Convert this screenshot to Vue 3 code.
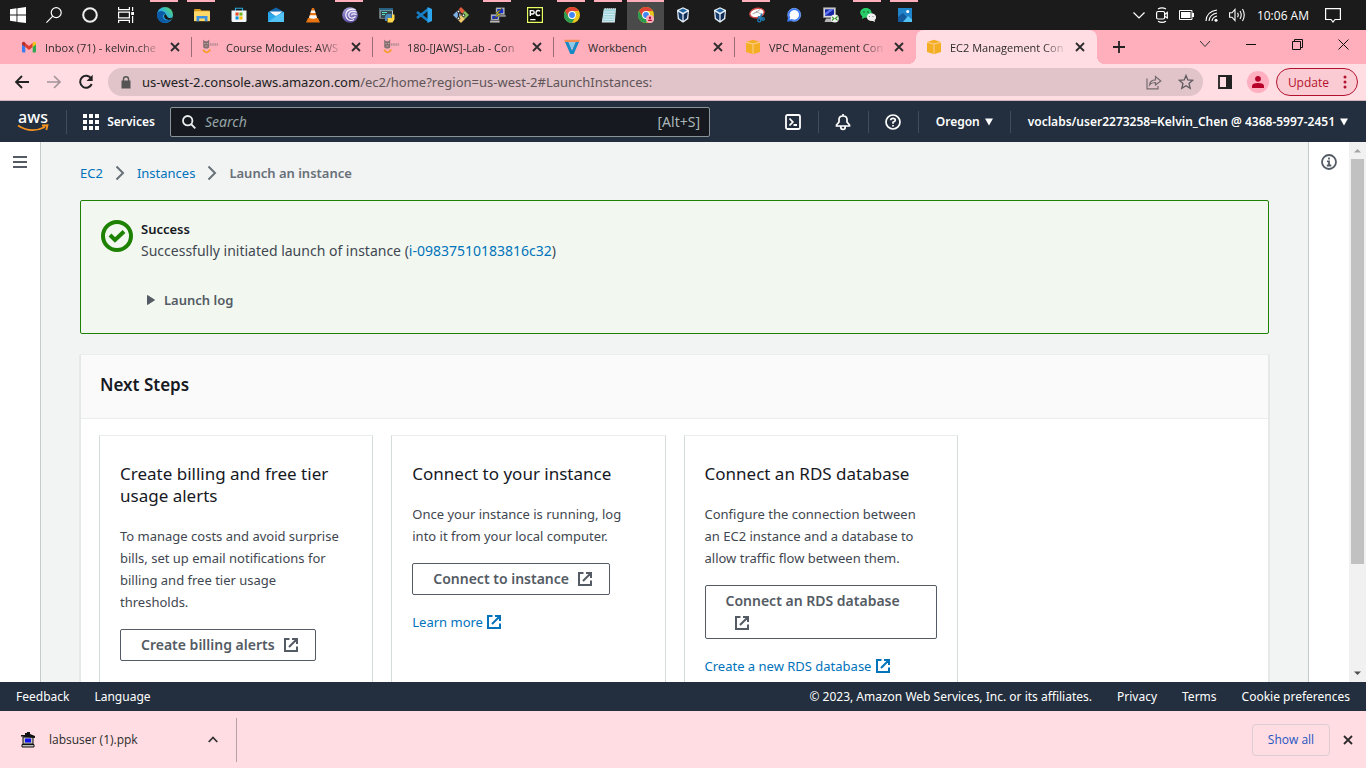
<script setup>
const pinned = [
  { id: 'edge', label: 'Microsoft Edge', open: true },
  { id: 'folder', label: 'File Explorer', open: true },
  { id: 'store', label: 'Microsoft Store' },
  { id: 'mail', label: 'Mail' },
  { id: 'vlc', label: 'VLC' },
  { id: 'torrent', label: 'BitTorrent', open: true },
  { id: 'idle', label: 'Python IDE' },
  { id: 'vscode', label: 'Visual Studio Code' },
  { id: 'git', label: 'Git' },
  { id: 'putty', label: 'PuTTY', open: true },
  { id: 'pycharm', label: 'PyCharm' },
  { id: 'chrome', label: 'Chrome', open: true },
  { id: 'notepad', label: 'Notepad', open: true },
  { id: 'chromeuser', label: 'Chrome profile', open: true, active: true },
  { id: 'vbox', label: 'VirtualBox' },
  { id: 'vbox', label: 'VirtualBox Manager' },
  { id: 'snip', label: 'Snipping Tool', open: true },
  { id: 'signal', label: 'Signal' },
  { id: 'winscp', label: 'Remote session' },
  { id: 'wechat', label: 'WeChat', open: true },
  { id: 'photos', label: 'Photos', open: true },
]
const system = [
  { id: 'start', label: 'Start' },
  { id: 'find', label: 'Search Windows' },
  { id: 'cortana', label: 'Cortana' },
  { id: 'taskview', label: 'Task View' },
]
const tabs = [
  { icon: 'gmail', title: 'Inbox (71) - kelvin.che' },
  { icon: 'canvas', title: 'Course Modules: AWS' },
  { icon: 'canvas', title: '180-[JAWS]-Lab - Con' },
  { icon: 'workbench', title: 'Workbench', short: true },
  { icon: 'cube', title: 'VPC Management Con' },
  { icon: 'cube', title: 'EC2 Management Con', active: true },
]
const cards = [
  {
    title: 'Create billing and free tier usage alerts',
    text: 'To manage costs and avoid surprise bills, set up email notifications for billing and free tier usage thresholds.',
    action: 'Create billing alerts',
  },
  {
    title: 'Connect to your instance',
    text: 'Once your instance is running, log into it from your local computer.',
    action: 'Connect to instance',
    link: 'Learn more',
  },
  {
    title: 'Connect an RDS database',
    text: 'Configure the connection between an EC2 instance and a database to allow traffic flow between them.',
    action: 'Connect an RDS database',
    link: 'Create a new RDS database',
  },
]
</script>

<template>
  <div class="screen">
    <svg class="sprite" width="0" height="0" aria-hidden="true">
      <defs>
        <linearGradient id="gEdge" x1="0" y1="1" x2="1" y2="0"><stop offset="0" stop-color="#1268c4" /><stop offset=".5" stop-color="#2bb2e2" /><stop offset="1" stop-color="#5fd95a" /></linearGradient>
        <linearGradient id="gTorrent" x1="0" y1="0" x2="0" y2="1"><stop offset="0" stop-color="#a9a0dc" /><stop offset="1" stop-color="#5a4c9e" /></linearGradient>
      </defs>
      <symbol id="start" viewBox="0 0 16 16"><path fill="#fff" d="M0 2.3 6.5 1.3V7.6H0zM7.4 1.2 16 0V7.6H7.4zM0 8.5H6.5V14.8L0 13.8zM7.4 8.5H16V16L7.4 14.9z" /></symbol>
      <symbol id="find" viewBox="0 0 16 16"><g fill="none" stroke="#fff" stroke-width="1.2"><circle cx="10.2" cy="5.6" r="5" /><path d="M6.8 9.2.4 15.6" /></g></symbol>
      <symbol id="cortana" viewBox="0 0 16 16"><circle cx="8" cy="8" r="6.8" fill="none" stroke="#eee" stroke-width="2" /></symbol>
      <symbol id="taskview" viewBox="0 0 16 16"><g fill="none" stroke="#fff" stroke-width="1.2"><path d="M.6 0V2.6H11.4V0M.6 16V13.4H11.4V16M.6 5.1H11.4V10.9H.6zM14.6 0V4M14.6 9V16" /></g><path fill="#fff" d="M13.2 5H16V8H13.2z" /></symbol>
      <symbol id="edge" viewBox="0 0 16 16"><circle cx="8" cy="8" r="8" fill="url(#gEdge)" /><path fill="#0c59a4" d="M.1 7C.8 4.600 3.200 3.800 5.400 4.200 7.400 4.600 8.600 5.800 8.500 7 6.200 6.700 5.300 9 6.200 11 7.500 13.600 11 14 14.500 12.200 11.500 16.800 4.500 17 1.500 12.400.4 10.800-.2 8.800.1 7Z" /><path fill="#1b1b1b" d="M7.200 8.300C7.800 7.700 8.500 7.500 8.600 6.800 9.600 8.300 10.100 10.200 12 10.900 13.600 11.300 14.800 10.700 15.500 10.300 15.300 11.200 14.800 12 14.200 12.600 9.700 13.700 6.400 11.500 7.200 8.300Z" /></symbol>
      <symbol id="folder" viewBox="0 0 16 16"><path fill="#d99a20" d="M.2 2H6L7.500 3.500H15.800V14.200H.2z" /><path fill="#ffd968" d="M0 4.200H15.300L16 5V14H0z" /><path fill="#3b91df" d="M2.500 9H13.500V14.200H10.800V11.500H5.200V14.200H2.500z" /></symbol>
      <symbol id="store" viewBox="0 0 16 16"><path fill="none" stroke="#28a8df" stroke-width="1.100" d="M4.500 5V1.300H11.500V5" /><path fill="#f3f6f8" d="M.5 3.500H15.500V13.500Q15.500 15 14 15H2Q.5 15 .5 13.500z" /><path fill="#e74c24" d="M4.500 5.500H7.600V8.600H4.500z" /><path fill="#72b51c" d="M8.400 5.500H11.500V8.600H8.400z" /><path fill="#1594d9" d="M4.500 9.400H7.600V12.500H4.500z" /><path fill="#fbb80d" d="M8.400 9.400H11.500V12.500H8.400z" /></symbol>
      <symbol id="mail" viewBox="0 0 16 16"><path fill="#1467ad" d="M0 5 8 .5 16 5V10H0z" /><path fill="#f4f8fb" d="M1.500 4.500H14.500L8 10z" /><path fill="#2aa7e8" d="M0 5 8 9 16 5V15H0z" /><path fill="#53c2f4" d="M0 15 10.500 7.500 16 5V15z" /></symbol>
      <symbol id="vlc" viewBox="0 0 16 16"><path fill="#e87511" d="M3 11H13L15 15.500H1zM7 1H9L12.500 12Q8 14.500 3.500 12z" /><path fill="#f7f7f7" d="M6.200 3.500H9.800L10.600 6H5.400zM4.800 8.200H11.200L12 10.800Q8 12.500 4 10.800z" /></symbol>
      <symbol id="torrent" viewBox="0 0 16 16"><circle cx="8" cy="8" r="7.800" fill="url(#gTorrent)" /><g fill="none" stroke="#f5f3ff" stroke-width="1.200"><path d="M13.500 2.500Q7 1 4.500 5 2.500 9.500 6 12.500 9 14.500 12 12.500M14.500 5Q8.500 3 7 6.500 6 10 9 11 11.500 11.500 13.500 9.500M14.500 7.500Q10 5.800 9.500 8.500" /></g></symbol>
      <symbol id="idle" viewBox="0 0 16 16"><path fill="#b9cbd1" d="M.5 1H14V11.500H.5z" /><path fill="#27617f" d="M.5 1H14V3.500H.5z" /><path fill="#35494f" d="M1.500 4H13V11H1.500z" /><path stroke="#54e1c4" d="M3 5.500H8M3 7.500H6" /><path fill="#4787bb" d="M7.500 7H12.500V11H8V14H6V9.500z" /><path fill="#ffd84a" d="M9 11H13V7.500H15.500V12.500L13.500 15.500H8.500V12z" /></symbol>
      <symbol id="vscode" viewBox="0 0 16 16"><path fill="none" stroke="#167ec5" stroke-width="2.600" d="M1 5 12.500 14M1 11 12.500 2" /><path fill="#2ca6ef" d="M11.500 0 16 2V14L11.500 16z" /></symbol>
      <symbol id="git" viewBox="0 0 16 16"><path fill="#df5b3d" d="M8 0 12 4 8 8 4 4z" /><path fill="#7eb1e3" d="M4 4 8 8 4 12 0 8z" /><path fill="#85bd5b" d="M12 4 16 8 12 12 8 8z" /><path fill="#efc76b" d="M8 8 12 12 8 16 4 12z" /><path fill="none" stroke="#222" stroke-width="1.300" d="M5.500 2.500V11M6 5 10.500 8" /><g fill="#fff" stroke="#222"><circle cx="5.500" cy="4.500" r="1.300" /><circle cx="10.500" cy="8.300" r="1.300" /><circle cx="5.500" cy="11.300" r="1.300" /></g></symbol>
      <symbol id="putty" viewBox="0 0 16 16"><g fill="#c9c9c9" stroke="#777" stroke-width=".6"><path d="M6 .8H14.500V7.500H6zM1 7.500H9V13H1zM0 13.800H9.500V15.500H0zM8 8.200H15.500V9.600H8z" /></g><path fill="#172fc8" d="M7.200 2H13.300V6.300H7.200zM2.200 8.700H7.800V12H2.200z" /><path fill="#fff200" stroke="#222" stroke-width=".5" d="M12.300 1 5.800 5.900 8.500 6.600 3.500 12 10.700 6.900 8 6z" /></symbol>
      <symbol id="pycharm" viewBox="0 0 16 16"><path fill="#080b06" stroke="#eaff62" stroke-width="1.200" d="M.6.6H15.400V15.400H.6z" /><g fill="none" stroke="#fff" stroke-width="1.400"><path d="M3.300 9V3.600H5.500Q7.200 3.600 7.200 5.300T5.500 7H3.300M13 4.300Q12.200 3.400 11 3.500 9 3.700 9 6T11 8.500Q12.200 8.600 13 7.700M3.200 12.600H8.500" /></g></symbol>
      <symbol id="chrome" viewBox="0 0 16 16"><circle cx="8" cy="8" r="8" fill="#eac51c" /><path fill="#df4435" d="M1 4.100C4.500-1.600 12-.8 14.900 4H8L4.500 10z" /><path fill="#2b9b51" d="M1 4 4.800 10.300 8 12H10.200L8 16C1 15.700-1.800 9.200 1 4Z" /><circle cx="8" cy="8" r="3.900" fill="#fff" /><circle cx="8" cy="8" r="2.900" fill="#4285f4" /></symbol>
      <symbol id="notepad" viewBox="0 0 16 16"><path fill="#e1edf0" d="M3 1H15L13.800 15.500H.8z" /><path fill="#9fd3dc" d="M3 2.300H14.500L13.200 14.300H1.500z" /><path stroke="#e6f6f7" stroke-width=".8" d="M3 5H13.800M2.700 7.500H13.500M2.500 10H13.200M2.200 12.300H13" /><path stroke="#464d4c" stroke-dasharray="1 1" d="M3.300 1.500H15" /></symbol>
      <symbol id="chromeuser" viewBox="0 0 16 16"><use href="#chrome" x="0" y="0" width="16" height="16" /><circle cx="12" cy="12" r="4" fill="#ffb0c0" /><circle cx="12" cy="10.800" r="1.200" fill="#b6002a" /><path fill="#b6002a" d="M9.700 14Q9.900 12.400 12 12.400T14.300 14z" /></symbol>
      <symbol id="vbox" viewBox="0 0 16 16"><path fill="#eaf2fb" d="M8 .3 14 3 13.300 12 8 15.800 2.700 12 2 3z" /><path fill="#2466a2" d="M8 1.600 12.200 3.500 8 5.800 3.800 3.500z" /><path fill="#153c6b" d="M3.200 4.700 7.400 7.200V13.800L4 11.300z" /><path fill="#102c52" d="M12.800 4.700 8.600 7.200V13.800L12 11.300z" /></symbol>
      <symbol id="snip" viewBox="0 0 16 16"><ellipse cx="8" cy="6" rx="7.200" ry="4.600" fill="#fff" stroke="#d74848" stroke-width="1.300" transform="rotate(-12 8 6)" /><path stroke="#b1b5b7" stroke-width="1" d="M3.500 7 8 5 11 2.500M8 5 12 7" /><path stroke="#217eb8" stroke-width="1.600" d="M13 6.500 11 11M9 9.500 13.500 12" /><g fill="none" stroke="#217eb8" stroke-width="1.300"><circle cx="10.300" cy="13.200" r="1.600" /><circle cx="14" cy="12" r="1.300" /></g></symbol>
      <symbol id="signal" viewBox="0 0 16 16"><circle cx="8.200" cy="7.800" r="6.500" fill="#3978f6" stroke="#7ea9fb" stroke-width=".8" /><path fill="#3978f6" d="M2 10.500 1.200 14.800 5.800 14z" /><path fill="#fff" d="M8.200 3A4.800 4.800 0 1 1 5.900 12L3.600 12.600 4.200 10.300A4.800 4.800 0 0 1 8.200 3Z" /></symbol>
      <symbol id="winscp" viewBox="0 0 16 16"><path fill="#dadada" stroke="#919191" d="M.5.800H12.500V10.500H.5z" /><path fill="#1725a5" d="M2 2.300H11V8.800H2z" /><path fill="#6278f2" d="M7 2.300H11L2 8.800V6z" /><path fill="#b8b8b8" d="M3 11.500H11V15H1.500z" /><circle cx="11.800" cy="11.500" r="4" fill="#f1f1f1" /><path fill="none" stroke="#349b27" stroke-width="1.100" d="M9 9.800 11 11.500 9 13.500M14.500 9.500 12.500 11.500 14.500 13.300" /></symbol>
      <symbol id="wechat" viewBox="0 0 16 16"><path fill="#29ce68" d="M6 1C12.500 1 14 9 7.500 10.600L4.500 10.700 1.800 12 2.400 9.500C-2 6 .8 1 6 1Z" /><path fill="#f0f0f0" d="M11 6.200C16 6.200 17.500 11 14.600 13L15 15 12.900 14C5.300 14.600 5 6.500 11 6.200Z" /><path fill="#19693b" d="M3.300 4.300H4.700V5.700H3.300zM7.300 4.300H8.700V5.700H7.300z" /><path fill="#888" d="M8.900 9H10V10.100H8.900zM12.500 9H13.600V10.100H12.500z" /></symbol>
      <symbol id="photos" viewBox="0 0 16 16"><path fill="#2084cb" d="M1 1H15V15H1z" /><path fill="#145a9c" d="M1 10 5.800 6 15 15H1z" /><path fill="#53c3f4" d="M6 15 11 9 15 12.500V15z" /><circle cx="10.700" cy="4.500" r="1.500" fill="#fff" /></symbol>

      <symbol id="gmail" viewBox="0 0 16 16"><path fill="#3b7ded" d="M1 4H4.300V13.500H2Q1 13.500 1 12.500z" /><path fill="#2da94f" d="M11.700 4H15V12.500Q15 13.500 14 13.500H11.700z" /><path fill="#df3d31" d="M4.300 4 8 7 11.700 4V8L8 11 4.300 8z" /><path fill="#bd2c25" d="M1 5Q1 2 3.500 3L4.300 4V8L1 5.500z" /><path fill="#fbc116" d="M15 5Q15 2 12.500 3L11.700 4V8L15 5.500z" /></symbol>
      <symbol id="canvas" viewBox="0 0 16 16"><path fill="#83706f" d="M1.200.5 2.800 2.200H5.500L7.200.5V7.500Q7.200 9.500 4.200 9.500T1.200 7.500z" /><path stroke="#d9b3b8" stroke-width=".8" d="M2.300 4.500H3.600M4.800 4.500H6.100M3.300 7H5.300" /><path stroke="#b58e94" stroke-width="2.500" stroke-dasharray="1.500 .7" d="M8 5.500H16" /><path fill="none" stroke="#f59a1b" stroke-width="1.500" d="M1 10.800Q4.500 15.800 7.500 11.300M7.700 10.300V12.500" /></symbol>
      <symbol id="workbench" viewBox="0 0 16 16"><path fill="#168ac5" d="M1 3H4.400L8 11.500 11.600 3H15L9.700 15H6.300z" /><path fill="#f58a50" d="M0 .8H16L15 3H1z" /><path fill="#81cced" d="M4.800 3.300H11.200L8 10.500z" /></symbol>
      <symbol id="cube" viewBox="0 0 16 16"><path fill="#f4ae24" d="M8 .8 15 3V13L8 15.300 1 13V3z" /><path fill="none" stroke="#ffd2a0" stroke-width=".9" d="M1 3.300 8 5 15 3.300M8 5V15" /></symbol>
      <symbol id="ext" viewBox="0 0 16 16"><g fill="none" stroke="currentColor" stroke-width="2"><path d="M6.500 2H2V14H14V9.500M9 2H14V7M14 2 6 10" /></g></symbol>
      <symbol id="x" viewBox="0 0 10 10"><path fill="none" stroke="currentColor" stroke-width="1.800" d="M1 1 9 9M9 1 1 9" /></symbol>
      <symbol id="sep" viewBox="0 0 10 16"><path fill="none" stroke="#687078" stroke-width="2" d="M1.500 1.500 8 8 1.500 14.500" /></symbol>
      <symbol id="down" viewBox="0 0 8 8"><path fill="currentColor" d="M0 .5H8L4 7.500z" /></symbol>
    </svg>

    <header class="taskbar">
      <div class="system">
        <button v-for="s in system" :key="s.id" class="task" :aria-label="s.label"><svg class="i16"><use :href="'#' + s.id" /></svg></button>
      </div>
      <div class="pinned">
        <button v-for="(p, n) in pinned" :key="n" class="task" :class="{ open: p.open, active: p.active }" :aria-label="p.label"><svg class="i16"><use :href="'#' + p.id" /></svg></button>
      </div>
      <div class="tray">
        <svg width="12" height="7" viewBox="0 0 12 7"><path fill="none" stroke="#fff" stroke-width="1.200" d="M.5.500 6 6 11.500.500" /></svg>
        <svg width="12" height="16" viewBox="0 0 12 16"><g fill="none" stroke="#fff" stroke-width="1.200"><rect x=".6" y="4.500" width="8" height="7.500" rx="1.500" /><path d="M8.600 7.500 11.300 5.500V11L8.600 9.200M2 2Q6-.2 10 2M2 14.200Q6 16.400 10 14.200" /></g></svg>
        <svg width="15" height="10" viewBox="0 0 15 10"><path fill="none" stroke="#fff" d="M.5.500H13V9.500H.5z" /><path fill="#fff" d="M2 2H11.500V8H2zM13 3H15V7H13z" /></svg>
        <svg width="13" height="13" viewBox="0 0 13 13"><g fill="none" stroke="#fff" stroke-width="1.100"><path d="M1 12Q1.500 2.500 12 1M4 12Q4.500 5.500 12 4M7 12Q7.500 8 12 7" /></g><circle cx="11" cy="11.300" r="1.500" fill="#fff" /></svg>
        <svg width="17" height="14" viewBox="0 0 17 14"><g fill="none" stroke="#fff" stroke-width="1.100"><path d="M.6 4.800H3L6 1.500V12.500L3 9.200H.6zM8.500 4.800Q10 7 8.500 9.200M11 3Q13.500 7 11 11M13.500 1Q17 7 13.500 13" /></g></svg>
        <span class="clock">10:06 AM</span>
        <svg class="note" width="16" height="15" viewBox="0 0 16 15"><path fill="none" stroke="#fff" stroke-width="1.200" d="M.6.600H15.400V11.500H10L8 14 6 11.500H.6z" /></svg>
      </div>
    </header>

    <div class="tabstrip">
      <div v-for="(t, n) in tabs" :key="n" class="tab" :class="{ current: t.active, before: n === 4 }">
        <svg class="i16"><use :href="'#' + t.icon" /></svg>
        <span class="tabtitle" :class="{ faded: !t.short }">{{ t.title }}</span>
        <button class="close" aria-label="Close tab"><svg width="10" height="10"><use href="#x" /></svg></button>
      </div>
      <button class="newtab" aria-label="New tab"><svg width="12" height="12" viewBox="0 0 12 12"><path stroke="#222" stroke-width="1.800" d="M6 0V12M0 6H12" /></svg></button>
      <div class="winctl">
        <button aria-label="Search tabs"><svg width="12" height="8" viewBox="0 0 12 8"><path fill="none" stroke="#333" d="M1 1 6 6.500 11 1" /></svg></button>
        <button aria-label="Minimize"><svg width="12" height="8" viewBox="0 0 12 8"><path stroke="#111" d="M1 4.500H11" /></svg></button>
        <button aria-label="Restore"><svg width="11" height="11" viewBox="0 0 11 11"><path fill="none" stroke="#111" d="M.5 2.500H8.500V10.500H.5zM2.500 2.500V.500H10.500V8.500H8.500" /></svg></button>
        <button aria-label="Close window"><svg width="11" height="11" viewBox="0 0 11 11"><path stroke="#111" d="M.5.500 10.500 10.500M10.500.500.500 10.500" /></svg></button>
      </div>
    </div>

    <div class="toolbar">
      <button class="nav" aria-label="Back"><svg width="16" height="16" viewBox="0 0 16 16"><path fill="none" stroke="#222" stroke-width="1.800" d="M15 8H2M8 2 2 8 8 14" /></svg></button>
      <button class="nav" aria-label="Forward"><svg width="16" height="16" viewBox="0 0 16 16"><path fill="none" stroke="#a3949a" stroke-width="1.600" d="M1 8H14M8 2 14 8 8 14" /></svg></button>
      <button class="nav" aria-label="Reload"><svg width="16" height="16" viewBox="0 0 16 16"><path fill="none" stroke="#222" stroke-width="2" d="M13.200 4.500A6 6 0 1 0 13.700 10" /><path fill="#222" d="M14.700.800V7H8.500z" /></svg></button>
      <div class="address">
        <svg width="10" height="13" viewBox="0 0 10 13"><path fill="#555" d="M.5 4.500H9.500V12.500H.5z" /><path fill="none" stroke="#555" stroke-width="1.400" d="M2.500 5V3Q2.500.800 5 .800T7.500 3V5" /></svg>
        <span class="url" role="textbox" aria-label="Address"><b>us-west-2.console.aws.amazon.com</b>/ec2/home?region=us-west-2#LaunchInstances:</span>
        <svg width="16" height="15" viewBox="0 0 16 15"><g fill="none" stroke="#756b6f" stroke-width="1.200"><path d="M1 3.500V13.800H12V11" /><path d="M3.500 10Q4 5 9.500 4.800V1.500L14.800 6 9.500 10V7.500Q5.500 7.300 3.500 10z" /></g></svg>
        <svg width="16" height="16" viewBox="0 0 16 16"><path fill="none" stroke="#615b60" stroke-width="1.300" d="M8 1.500 9.800 6 14.700 6.300 11 9.500 12.200 14.300 8 11.700 3.800 14.300 5 9.500 1.300 6.300 6.200 6z" /></svg>
      </div>
      <button class="panel" aria-label="Side panel"><svg width="14" height="14" viewBox="0 0 14 14"><path fill="none" stroke="#222" stroke-width="1.800" d="M1 1H13V13H1z" /><path fill="#222" d="M8 0H14V14H8z" /></svg></button>
      <button class="avatar" aria-label="Profile"><svg width="22" height="22" viewBox="0 0 22 22"><circle cx="11" cy="11" r="11" fill="#ffafbf" /><circle cx="11" cy="7.800" r="2.900" fill="#b6002a" /><path fill="#b6002a" d="M5 17V15Q5 12 11 12T17 15V17z" /></svg></button>
      <button class="update">Update<svg width="4" height="14" viewBox="0 0 4 14"><g fill="#b3122e"><circle cx="2" cy="2" r="1.500" /><circle cx="2" cy="7" r="1.500" /><circle cx="2" cy="12" r="1.500" /></g></svg></button>
    </div>

    <nav class="aws">
      <a class="logo" href="#" aria-label="aws"><span>aws</span><svg width="32" height="8" viewBox="0 0 32 8"><path fill="none" stroke="#f79420" stroke-width="1.800" d="M1 1.500Q14 10 28 3M25 1.500 30.500 1.300 29.300 6" /></svg></a>
      <button class="services"><svg width="16" height="16" viewBox="0 0 16 16"><path fill="#fff" d="M0 0H4V4H0zM6 0H10V4H6zM12 0H16V4H12zM0 6H4V10H0zM6 6H10V10H6zM12 6H16V10H12zM0 12H4V16H0zM6 12H10V16H6zM12 12H16V16H12z" /></svg>Services</button>
      <label class="search">
        <svg width="14" height="14" viewBox="0 0 14 14"><g fill="none" stroke="#eaeded" stroke-width="1.800"><circle cx="5.700" cy="5.700" r="4.700" /><path d="M9 9 13.300 13.300" /></g></svg>
        <input type="text" placeholder="Search" aria-label="Search" />
        <span>[Alt+S]</span>
      </label>
      <div class="tools">
        <button class="tool" aria-label="CloudShell"><svg width="16" height="16" viewBox="0 0 16 16"><g fill="none" stroke="#fff" stroke-width="1.800"><rect x="1" y="1" width="14" height="14" rx="1.500" /><path d="M4.500 4.500 7.800 8 4.500 11.500M8.500 11H12" /></g></svg></button>
        <button class="tool" aria-label="Notifications"><svg width="16" height="18" viewBox="0 0 16 18"><g fill="none" stroke="#fff" stroke-width="1.700"><path d="M8 1V3M1.500 13V12L4 9V6.500Q4 3 8 3T12 6.500V9L14.500 12V13zM5.700 13.500Q5.700 16.500 8 16.500T10.300 13.500" /></g></svg></button>
        <button class="tool" aria-label="Help"><svg width="16" height="16" viewBox="0 0 16 16"><g fill="none" stroke="#fff" stroke-width="1.700"><circle cx="8" cy="8" r="7" /><path d="M5.700 6.300Q5.700 4.300 8 4.300T10.300 6.200Q10.300 7.300 8 8.300V9.800M8 11V12.500" /></g></svg></button>
        <button class="tool region">Oregon <svg width="8" height="8"><use href="#down" /></svg></button>
        <button class="tool account">voclabs/user2273258=Kelvin_Chen @ 4368-5997-2451 <svg width="8" height="8"><use href="#down" /></svg></button>
      </div>
    </nav>

    <div class="body">
      <aside class="side left"><button aria-label="Open navigation"><svg width="14" height="12" viewBox="0 0 14 12"><path stroke="#545b64" stroke-width="2" d="M0 1H14M0 6H14M0 11H14" /></svg></button></aside>
      <main class="content">
        <nav class="crumbs" aria-label="Breadcrumb">
          <a href="#">EC2</a><svg width="10" height="16"><use href="#sep" /></svg>
          <a href="#">Instances</a><svg width="10" height="16"><use href="#sep" /></svg>
          <span>Launch an instance</span>
        </nav>
        <section class="alert">
          <svg width="32" height="32" viewBox="0 0 32 32"><g fill="none" stroke="#1d8102" stroke-width="4"><circle cx="16" cy="16" r="14" /><path d="M9 15 14 20 23 11.500" /></g></svg>
          <div>
            <strong>Success</strong>
            <p>Successfully initiated launch of instance (<a href="#">i-09837510183816c32</a>)</p>
            <button class="log"><svg width="8" height="10" viewBox="0 0 8 10"><path fill="#545b64" stroke="#545b64" stroke-linejoin="round" d="M.5.500 7.500 5 .5 9.500z" /></svg>Launch log</button>
          </div>
        </section>
        <section class="next">
          <h2>Next Steps</h2>
          <div class="cards">
            <article v-for="c in cards" :key="c.title" class="card">
              <h3>{{ c.title }}</h3>
              <p>{{ c.text }}</p>
              <button class="action">{{ c.action }}<svg class="i16"><use href="#ext" /></svg></button>
              <a v-if="c.link" href="#" class="more">{{ c.link }} <svg class="i16"><use href="#ext" /></svg></a>
            </article>
          </div>
        </section>
      </main>
      <aside class="side right"><button aria-label="Info"><svg width="16" height="16" viewBox="0 0 16 16"><g fill="none" stroke="#545b64" stroke-width="1.800"><circle cx="8" cy="8" r="7" /><path d="M8 3.500V5.500M6 7.300H8V11M5.800 11.500H10.300" /></g></svg></button></aside>
      <div class="scroll" aria-hidden="true">
        <svg width="17" height="17" viewBox="0 0 17 17"><path fill="#a3a3a3" d="M5 10.500H12L8.500 7z" /></svg>
        <div class="track"><div class="thumb"></div></div>
        <svg width="17" height="17" viewBox="0 0 17 17"><path fill="#505050" d="M5 6.500H12L8.500 10z" /></svg>
      </div>
    </div>

    <footer class="foot">
      <a href="#">Feedback</a><a href="#">Language</a>
      <span>© 2023, Amazon Web Services, Inc. or its affiliates.</span>
      <a href="#">Privacy</a><a href="#">Terms</a><a href="#">Cookie preferences</a>
    </footer>

    <div class="downloads">
      <button class="file">
        <svg width="16" height="16" viewBox="0 0 16 16"><path fill="#bfbfbf" stroke="#111" d="M3 5H13V12H3zM2 12.500H14V15H2z" /><path fill="#1010ee" d="M5 6.500H11V10.500H5z" /><path fill="#111" d="M1 3H5V1H7V0H10V2L15 4V6L1 4.500z" /></svg>
        <span>labsuser (1).ppk</span>
        <svg width="10" height="7" viewBox="0 0 10 7"><path fill="none" stroke="#333" stroke-width="1.800" d="M.7 6 5 1.500 9.300 6" /></svg>
      </button>
      <button class="showall">Show all</button>
      <button class="close" aria-label="Close downloads"><svg width="10" height="10"><use href="#x" /></svg></button>
    </div>
  </div>
</template>

<style>
body { margin: 0; }
</style>

<style scoped>
.screen { --ember: "Noto Sans", sans-serif; --ui: "Open Sans", sans-serif; display: flex; flex-direction: column; height: 100vh; overflow: hidden; font-family: var(--ui); font-size: 12px; color: #2b2b2b; }
.sprite { position: absolute; }
svg { display: block; flex: none; }
button { display: flex; align-items: center; justify-content: center; padding: 0; border: 0; background: none; color: inherit; font: inherit; }
a { color: #0073bb; text-decoration: none; }
h2, h3, p { margin: 0; }
.i16 { width: 16px; height: 16px; }

.taskbar { display: flex; flex: none; height: 30px; background: #1b1b1b; color: #fff; }
.system, .pinned { display: flex; }
.system { margin-right: 2px; }
.system .task { width: 36px; }
.task { position: relative; width: 37px; }
.task.open::before { content: ""; position: absolute; top: 0; left: 4px; right: 5px; height: 2px; background: #ffaebc; }
.task.active { background: #4a4a4a; }
.task.active::before { left: 0; right: 0; }
.tray { display: flex; align-items: center; gap: 11px; margin-left: auto; padding-right: 25px; }
.clock { margin-right: 5px; white-space: nowrap; }

.tabstrip { display: flex; flex: none; height: 34px; padding-left: 11px; background: #ffaebc; }
.tab { position: relative; display: flex; align-items: center; gap: 8px; box-sizing: border-box; width: 181px; padding: 0 12px 0 10px; }
.tab:not(.current, .before)::after { content: ""; position: absolute; right: 0; top: 7px; width: 1px; height: 20px; background: #9b6a74; }
.tab.current { background: #ffdde3; border-radius: 8px 8px 0 0; }
.tab.current::before, .tab.current::after { content: ""; position: absolute; bottom: 0; width: 8px; height: 8px; }
.tab.current::before { left: -8px; background: radial-gradient(circle at 0 0, transparent 8px, #ffdde3 8px); }
.tab.current::after { right: -8px; background: radial-gradient(circle at 100% 0, transparent 8px, #ffdde3 8px); }
.tabtitle { flex: 1; min-width: 0; font-size: 11px; white-space: nowrap; }
.tabtitle.faded { mask-image: linear-gradient(to right, #000 80%, transparent); }
.newtab { width: 44px; }
.winctl { display: flex; align-items: flex-start; margin-left: auto; }
.winctl button { width: 46px; height: 28px; }

.toolbar { display: flex; align-items: center; flex: none; height: 36px; padding: 0 8px 0 6px; background: #ffdde3; border-bottom: 1px solid #d0b5bb; }
.nav { width: 32px; height: 32px; }
.address { display: flex; align-items: center; flex: 1; gap: 16px; height: 28px; padding: 0 9px 0 13px; margin-left: 6px; border-radius: 14px; background: #e0c4c9; }
.url { flex: 1; margin-left: -5px; font-family: var(--ember); font-size: 13px; white-space: nowrap; color: #5f5458; }
.url b { font-weight: 400; color: #222; }
.panel { width: 44px; }
.avatar { margin-right: 7px; }
.update { gap: 14px; box-sizing: border-box; height: 28px; padding: 0 10px 0 11px; border: 1px solid #b3122e; border-radius: 14px; background: #facbd3; color: #b3122e; font-size: 12px; }

.aws { display: flex; align-items: center; flex: none; height: 41px; background: #232f3e; color: #fff; font-family: var(--ember); font-size: 12px; font-weight: 600; }
.logo { display: flex; flex-direction: column; align-items: center; box-sizing: border-box; width: 67px; padding-bottom: 2px; color: #fff; font-size: 16px; line-height: 14px; font-weight: 500; border-right: 1px solid #414d5c; }
.services { gap: 8px; width: 103px; padding-left: 1px; }
.search { display: flex; align-items: center; gap: 9px; flex: 0 1 540px; box-sizing: border-box; height: 30px; padding: 0 9px 0 11px; border: 1px solid #879596; border-radius: 2px; background: #16191f; color: #aab7b8; font-size: 14px; font-weight: 400; }
.search input { flex: 1; min-width: 0; padding: 0; border: 0; outline: 0; background: none; color: #fff; font: inherit; }
.search input::placeholder { color: #95a5a6; font-style: italic; opacity: 1; }
.tools { display: flex; align-items: center; margin-left: auto; }
.tool { box-sizing: border-box; width: 50px; height: 22px; white-space: nowrap; border-right: 1px solid #414d5c; }
.region { width: auto; gap: 5px; padding: 0 17px; }
.account { width: auto; gap: 5px; padding: 0 18px 0 17px; border: 0; }

.body { display: flex; flex: 1; min-height: 0; background: #f2f3f3; font-family: var(--ember); }
.side { flex: none; box-sizing: border-box; width: 41px; padding-top: 12px; background: #fff; border: 0 solid #c5cbcb; }
.side button { width: 100%; height: 16px; }
.left { border-right-width: 1px; }
.right { border-left-width: 1px; }
.content { flex: 1; min-width: 0; padding: 20px 39px 0; overflow: hidden; color: #16191f; font-size: 14px; line-height: 22px; }
.crumbs { display: flex; align-items: center; gap: 12px; height: 22px; font-size: 13px; }
.crumbs span { color: #687078; font-weight: 600; }
.alert { display: flex; gap: 8px; margin-top: 16px; padding: 19px 20px 22px; border: 1px solid #1d8102; border-radius: 2px; background: #f2f8f0; font-size: 13px; }
.alert div { margin-top: -2px; }
.alert strong { display: block; font-weight: 600; }
.alert p { color: #414750; font-size: 14px; }
.log { gap: 9px; height: 22px; margin: 27px 0 0 6px; color: #545b64; font-weight: 600; }
.next { margin-top: 20px; background: #fff; border: 1px solid #e4e8e8; border-top-color: #eaeded; box-shadow: 0 1px 1px #001c2440; }
.next h2 { padding: 19px 19px 22px; background: #fafafa; border-bottom: 1px solid #eaeded; font-size: 17px; font-weight: 600; line-height: 22px; }
.cards { display: grid; grid-template-columns: repeat(4, 1fr); gap: 18px; padding: 16px 18px 20px; }
.card { min-width: 0; min-height: 250px; padding: 27px 20px 20px; border: 1px solid #d5dbdb; border-top-color: #eaeded; font-size: 13px; }
.card h3 { font-size: 17px; font-weight: 400; line-height: 22px; }
.card p { margin: 18px 0 16px; padding-right: 6px; color: #414750; }
.action { display: inline-block; max-width: 100%; padding: 4px 20px; border: 1px solid #545b64; border-radius: 2px; color: #545b64; font-size: 14px; font-weight: 600; line-height: 22px; text-align: left; }
.action svg, .more svg { display: inline-block; vertical-align: -3px; }
.action svg { margin: 0 -4px 0 8px; }
.more { display: block; margin-top: 16px; }
.scroll { display: flex; flex-direction: column; flex: none; width: 17px; background: #f1f1f1; }
.track { flex: 1; }
.thumb { height: 80%; margin: 0 2px; background: #c1c1c1; }

.foot { display: flex; align-items: center; gap: 25px; flex: none; height: 29px; padding: 0 16px; background: #232f3e; color: #fff; font-family: var(--ember); font-size: 12px; font-weight: 400; white-space: nowrap; }
.foot a { color: #fff; }
.foot span { margin-left: auto; }

.downloads { display: flex; align-items: center; flex: none; height: 57px; padding-right: 13px; background: #ffdde3; }
.file { box-sizing: border-box; width: 237px; height: 44px; padding: 0 18px 0 20px; gap: 13px; border-right: 1px solid #b3a0a4; }
.file span { flex: 1; text-align: left; }
.showall { box-sizing: border-box; width: 78px; height: 32px; margin-left: auto; margin-right: 13px; border: 1px solid #dccdd5; border-radius: 4px; color: #1f55c0; font-size: 12px; }
</style>
